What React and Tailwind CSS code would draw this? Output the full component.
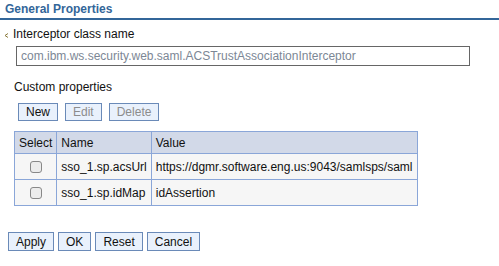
import React from 'react';

const rows = [
  { name: 'sso_1.sp.acsUrl', value: 'https://dgmr.software.eng.us:9043/samlsps/saml' },
  { name: 'sso_1.sp.idMap', value: 'idAssertion' },
];

function Btn({ children, disabled, tall }) {
  return (
    <button
      className={`${tall ? 'h-[19px]' : 'h-[18px]'} px-[7px] border border-[#6a8ab8] bg-[#e9f1fc] text-[12px] leading-none ${disabled ? 'text-[#8c8c8c]' : 'text-[#111]'}`}
    >
      {children}
    </button>
  );
}

export default function App() {
  return (
    <div className="w-[499px] h-[266px] bg-white font-['Liberation_Sans',Arial,sans-serif] text-[12px] leading-[14px] text-[#111]">
      <div className="pt-[2px] px-[5px] border-b-2 border-[#336699] pb-[2px]">
        <h2 className="text-[12px] font-bold text-[#336699] leading-[14px]">General Properties</h2>
      </div>

      <div className="flex items-center pl-[4px] mt-[7px] h-[14px]">
        <svg width="5" height="5" viewBox="0 0 5 5" className="mr-[4px] mt-[3px]">
          <path d="M4 0.5 L1 2.5 L4 4.5" fill="none" stroke="#8a7a3a" strokeWidth="1" />
        </svg>
        <span>Interceptor class name</span>
      </div>

      <div className="ml-[16px] mt-[5px] w-[454px] h-[20px] border border-[#666] flex items-center px-[4px] text-[#7c8795]">
        com.ibm.ws.security.web.saml.ACSTrustAssociationInterceptor
      </div>

      <div className="ml-[14px] mt-[14px]">Custom properties</div>

      <div className="flex gap-[7px] ml-[18px] mt-[9px]">
        <Btn>New</Btn>
        <Btn disabled>Edit</Btn>
        <Btn disabled>Delete</Btn>
      </div>

      <table className="ml-[14px] mt-[10px] w-[403px] border-collapse border border-[#8aa6d8]">
        <thead>
          <tr className="h-[22px] bg-[#d2d9e8]">
            <th className="w-[44px] border border-[#8aa6d8] font-normal text-left px-[4px]">Select</th>
            <th className="w-[94px] border border-[#8aa6d8] font-normal text-left px-[4px]">Name</th>
            <th className="border border-[#8aa6d8] font-normal text-left px-[4px]">Value</th>
          </tr>
        </thead>
        <tbody>
          {rows.map((r) => (
            <tr key={r.name} className="h-[26px] bg-[#f6f6f6]">
              <td className="border border-[#8aa6d8] text-center">
                <span className="inline-block w-[12px] h-[12px] rounded-[3px] border border-[#888] bg-[#ececec] align-middle" />
              </td>
              <td className="border border-[#8aa6d8] px-[4px] whitespace-nowrap">{r.name}</td>
              <td className="border border-[#8aa6d8] px-[4px] whitespace-nowrap">{r.value}</td>
            </tr>
          ))}
        </tbody>
      </table>

      <div className="flex gap-[4px] ml-[8px] mt-[26px]">
        <Btn tall>Apply</Btn>
        <Btn tall>OK</Btn>
        <Btn tall>Reset</Btn>
        <Btn tall>Cancel</Btn>
      </div>
    </div>
  );
}
